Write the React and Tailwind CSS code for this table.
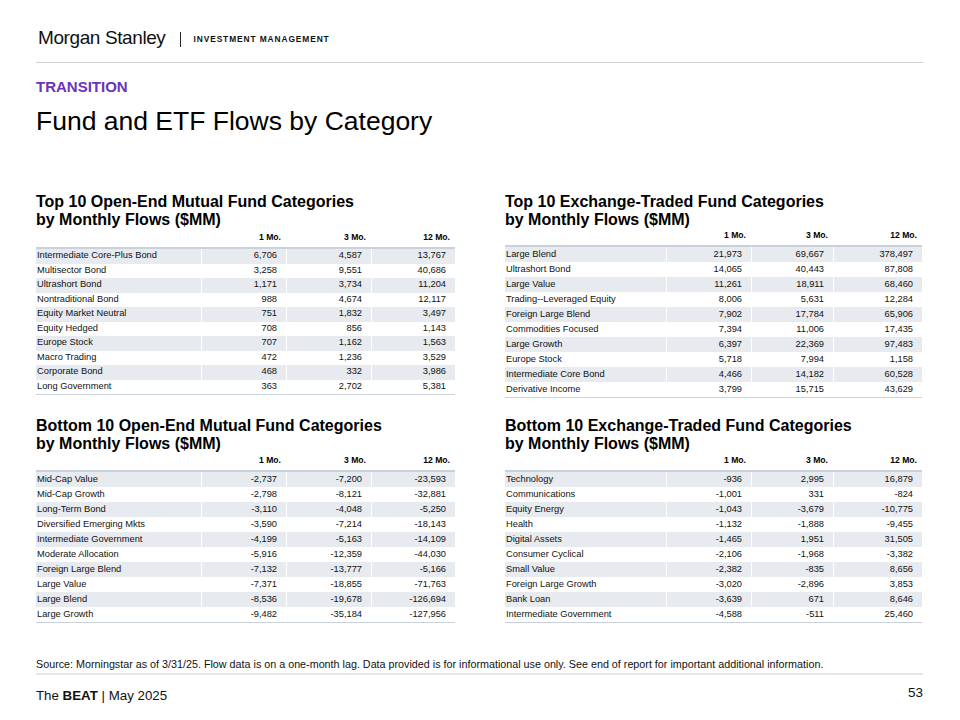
import React from 'react';

const topMf = [
  ['Intermediate Core-Plus Bond', '6,706', '4,587', '13,767'],
  ['Multisector Bond', '3,258', '9,551', '40,686'],
  ['Ultrashort Bond', '1,171', '3,734', '11,204'],
  ['Nontraditional Bond', '988', '4,674', '12,117'],
  ['Equity Market Neutral', '751', '1,832', '3,497'],
  ['Equity Hedged', '708', '856', '1,143'],
  ['Europe Stock', '707', '1,162', '1,563'],
  ['Macro Trading', '472', '1,236', '3,529'],
  ['Corporate Bond', '468', '332', '3,986'],
  ['Long Government', '363', '2,702', '5,381'],
];

const topEtf = [
  ['Large Blend', '21,973', '69,667', '378,497'],
  ['Ultrashort Bond', '14,065', '40,443', '87,808'],
  ['Large Value', '11,261', '18,911', '68,460'],
  ['Trading--Leveraged Equity', '8,006', '5,631', '12,284'],
  ['Foreign Large Blend', '7,902', '17,784', '65,906'],
  ['Commodities Focused', '7,394', '11,006', '17,435'],
  ['Large Growth', '6,397', '22,369', '97,483'],
  ['Europe Stock', '5,718', '7,994', '1,158'],
  ['Intermediate Core Bond', '4,466', '14,182', '60,528'],
  ['Derivative Income', '3,799', '15,715', '43,629'],
];

const bottomMf = [
  ['Mid-Cap Value', '-2,737', '-7,200', '-23,593'],
  ['Mid-Cap Growth', '-2,798', '-8,121', '-32,881'],
  ['Long-Term Bond', '-3,110', '-4,048', '-5,250'],
  ['Diversified Emerging Mkts', '-3,590', '-7,214', '-18,143'],
  ['Intermediate Government', '-4,199', '-5,163', '-14,109'],
  ['Moderate Allocation', '-5,916', '-12,359', '-44,030'],
  ['Foreign Large Blend', '-7,132', '-13,777', '-5,166'],
  ['Large Value', '-7,371', '-18,855', '-71,763'],
  ['Large Blend', '-8,536', '-19,678', '-126,694'],
  ['Large Growth', '-9,482', '-35,184', '-127,956'],
];

const bottomEtf = [
  ['Technology', '-936', '2,995', '16,879'],
  ['Communications', '-1,001', '331', '-824'],
  ['Equity Energy', '-1,043', '-3,679', '-10,775'],
  ['Health', '-1,132', '-1,888', '-9,455'],
  ['Digital Assets', '-1,465', '1,951', '31,505'],
  ['Consumer Cyclical', '-2,106', '-1,968', '-3,382'],
  ['Small Value', '-2,382', '-835', '8,656'],
  ['Foreign Large Growth', '-3,020', '-2,896', '3,853'],
  ['Bank Loan', '-3,639', '671', '8,646'],
  ['Intermediate Government', '-4,588', '-511', '25,460'],
];

// колонки таблиц: левая и правая половины чуть разные
const LEFT_COLS = 'grid-cols-[165px_85px_85px_84px]';
const RIGHT_COLS = 'grid-cols-[161px_85px_82px_89px]';

const NumCell = ({ children }) => (
  <div className="h-full flex items-center justify-end pr-[9px] border-l border-white">{children}</div>
);

// одна таблица с заголовком из двух строк
const FlowTable = ({ title, rows, cols, rowH, headH }) => (
  <div className="flex flex-col">
    <h2 className="text-[16px] leading-[18px] font-bold text-black">
      {title}
      <br />
      by Monthly Flows ($MM)
    </h2>
    <div className={`grid ${cols} ${headH} items-end pb-[3px] border-b-2 border-[#c9d1db] text-[8.6px] font-bold`}>
      <div />
      <div className="text-right pr-[5px]">1 Mo.</div>
      <div className="text-right pr-[5px]">3 Mo.</div>
      <div className="text-right pr-[5px]">12 Mo.</div>
    </div>
    <div className="border-b border-[#c9d1db]">
      {rows.map((r, i) => (
        <div
          key={r[0]}
          className={`grid ${cols} ${rowH} items-center text-[9.3px] text-[#111] ${i % 2 === 0 ? 'bg-[#e7eaee]' : 'bg-white'}`}
        >
          <div className="pl-[1px] truncate">{r[0]}</div>
          <NumCell>{r[1]}</NumCell>
          <NumCell>{r[2]}</NumCell>
          <NumCell>{r[3]}</NumCell>
        </div>
      ))}
    </div>
  </div>
);

export default function App() {
  return (
    <div
      className="w-[960px] h-[720px] bg-white pl-[36px] pr-[37px] flex flex-col text-black overflow-hidden"
      style={{ fontFamily: '"Liberation Sans", Arial, sans-serif' }}
    >
      {/* шапка с логотипом */}
      <div className="mt-[28px] h-[20px] flex items-center">
        <span className="ml-[2px] text-[19px] leading-[20px] tracking-[-0.4px] text-[#111]">Morgan Stanley</span>
        <span className="ml-[15px] w-px h-[15px] bg-[#222] mt-[3px]" />
        <span className="ml-[12px] mt-[3px] text-[8.4px] font-bold tracking-[0.9px] text-[#111]">INVESTMENT MANAGEMENT</span>
      </div>
      <div className="mt-[14px] h-px bg-[#cfcfcf]" />

      <div className="mt-[15px] text-[15px] leading-[18px] font-bold text-[#6b33b7]">TRANSITION</div>
      <h1 className="mt-[9px] text-[26.5px] leading-[32px] text-black">Fund and ETF Flows by Category</h1>

      <div className="mt-[56px] grid grid-cols-[419px_417px] grid-rows-[224px_206px] gap-x-[50px]">
        <FlowTable title="Top 10 Open-End Mutual Fund Categories" rows={topMf} cols={LEFT_COLS} rowH="h-[14.5px]" headH="h-[20px]" />
        <FlowTable title="Top 10 Exchange-Traded Fund Categories" rows={topEtf} cols={RIGHT_COLS} rowH="h-[15px]" headH="h-[18px]" />
        <FlowTable title="Bottom 10 Open-End Mutual Fund Categories" rows={bottomMf} cols={LEFT_COLS} rowH="h-[15px]" headH="h-[19px]" />
        <FlowTable title="Bottom 10 Exchange-Traded Fund Categories" rows={bottomEtf} cols={RIGHT_COLS} rowH="h-[15px]" headH="h-[19px]" />
      </div>

      <p className="mt-[35px] text-[10.75px] leading-[12px] text-[#111] whitespace-nowrap">
        Source: Morningstar as of 3/31/25. Flow data is on a one-month lag. Data provided is for informational use only. See end of report for important additional information.
      </p>
      <div className="mt-[3px] h-[2px] bg-[#e6e6e6]" />

      <div className="mt-[13px] flex justify-between items-start">
        <span className="text-[13.3px] leading-[16px] text-[#111]">
          The <span className="font-bold">BEAT</span> | May 2025
        </span>
        <span className="text-[13.5px] leading-[16px] -mt-[3px] text-[#111]">53</span>
      </div>
    </div>
  );
}
